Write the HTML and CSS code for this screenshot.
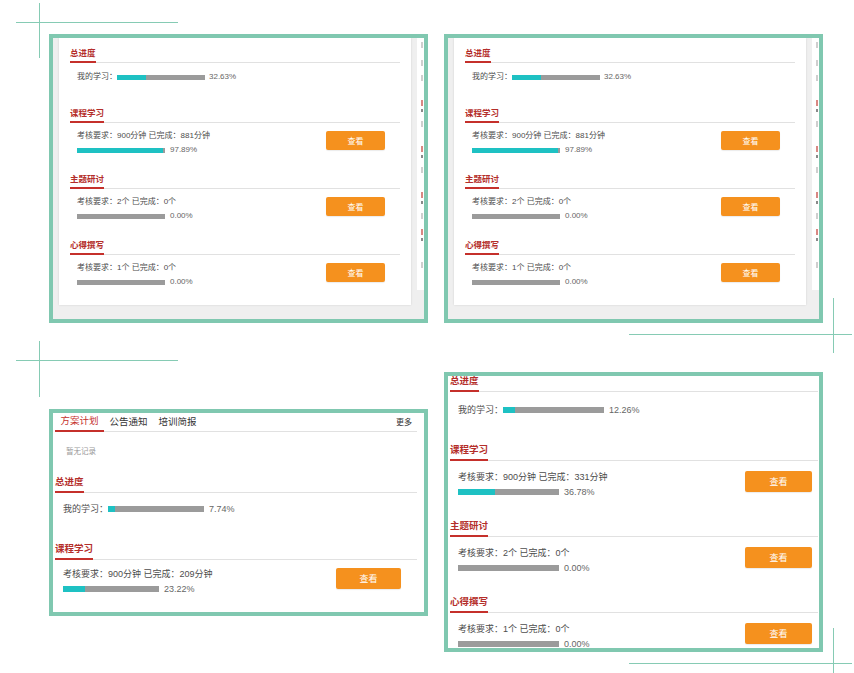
FILE: index.html
```html
<!DOCTYPE html>
<html lang="zh-CN">
<head>
    <meta charset="UTF-8">
    <meta name="viewport" content="width=device-width, initial-scale=1.0">
    <title>学习进度</title>
    <link rel="stylesheet" href="styles.css">
</head>
<body>
<div class="canvas">
    <!-- decorative crosses -->
    <span class="cross-h tl-h"></span><span class="cross-v tl-v"></span>
    <span class="cross-h ml-h"></span><span class="cross-v ml-v"></span>
    <span class="cross-h mr-h"></span><span class="cross-v mr-v"></span>
    <span class="cross-h br-h"></span><span class="cross-v br-v"></span>

    <div class="collage">
        <!-- shot 1 -->
        <div class="frame frame-top">
            <div class="desk">
                <div class="card">
                    <div class="sec sec-first">
                        <div class="sec-head"><span class="sec-title">总进度</span></div>
                        <div class="row"><span class="label">我的学习：</span><span class="bar"><i style="width:32.63%"></i></span><span class="pct">32.63%</span></div>
                    </div>
                    <div class="sec">
                        <div class="sec-head"><span class="sec-title">课程学习</span></div>
                        <div class="sec-body">
                            <div class="info">
                                <div class="req">考核要求：900分钟 已完成：881分钟</div>
                                <div class="row"><span class="bar"><i style="width:97.89%"></i></span><span class="pct">97.89%</span></div>
                            </div>
                            <button class="btn">查看</button>
                        </div>
                    </div>
                    <div class="sec">
                        <div class="sec-head"><span class="sec-title">主题研讨</span></div>
                        <div class="sec-body">
                            <div class="info">
                                <div class="req">考核要求：2个 已完成：0个</div>
                                <div class="row"><span class="bar"><i style="width:0%"></i></span><span class="pct">0.00%</span></div>
                            </div>
                            <button class="btn">查看</button>
                        </div>
                    </div>
                    <div class="sec">
                        <div class="sec-head"><span class="sec-title">心得撰写</span></div>
                        <div class="sec-body">
                            <div class="info">
                                <div class="req">考核要求：1个 已完成：0个</div>
                                <div class="row"><span class="bar"><i style="width:0%"></i></span><span class="pct">0.00%</span></div>
                            </div>
                            <button class="btn">查看</button>
                        </div>
                    </div>
                </div>
                <!-- neighbouring column, only its left edge shows -->
                <div class="side">
                    <span class="sd-g"></span>
                    <span class="sd-g sd-a"></span>
                    <span class="sd-g sd-b"></span>
                    <div class="sd-item"><span class="sd-r"></span><span class="sd-d"></span><span class="sd-g"></span></div>
                    <div class="sd-item"><span class="sd-r"></span><span class="sd-d"></span><span class="sd-g"></span></div>
                    <div class="sd-item"><span class="sd-r"></span><span class="sd-d"></span><span class="sd-g"></span></div>
                    <div class="sd-item sd-last"><span class="sd-r"></span><span class="sd-d"></span><span class="sd-g"></span></div>
                </div>
            </div>
        </div>

        <!-- shot 2 -->
        <div class="frame frame-top">
            <div class="desk">
                <div class="card">
                    <div class="sec sec-first">
                        <div class="sec-head"><span class="sec-title">总进度</span></div>
                        <div class="row"><span class="label">我的学习：</span><span class="bar"><i style="width:32.63%"></i></span><span class="pct">32.63%</span></div>
                    </div>
                    <div class="sec">
                        <div class="sec-head"><span class="sec-title">课程学习</span></div>
                        <div class="sec-body">
                            <div class="info">
                                <div class="req">考核要求：900分钟 已完成：881分钟</div>
                                <div class="row"><span class="bar"><i style="width:97.89%"></i></span><span class="pct">97.89%</span></div>
                            </div>
                            <button class="btn">查看</button>
                        </div>
                    </div>
                    <div class="sec">
                        <div class="sec-head"><span class="sec-title">主题研讨</span></div>
                        <div class="sec-body">
                            <div class="info">
                                <div class="req">考核要求：2个 已完成：0个</div>
                                <div class="row"><span class="bar"><i style="width:0%"></i></span><span class="pct">0.00%</span></div>
                            </div>
                            <button class="btn">查看</button>
                        </div>
                    </div>
                    <div class="sec">
                        <div class="sec-head"><span class="sec-title">心得撰写</span></div>
                        <div class="sec-body">
                            <div class="info">
                                <div class="req">考核要求：1个 已完成：0个</div>
                                <div class="row"><span class="bar"><i style="width:0%"></i></span><span class="pct">0.00%</span></div>
                            </div>
                            <button class="btn">查看</button>
                        </div>
                    </div>
                </div>
                <div class="side">
                    <span class="sd-g"></span>
                    <span class="sd-g sd-a"></span>
                    <span class="sd-g sd-b"></span>
                    <div class="sd-item"><span class="sd-r"></span><span class="sd-d"></span><span class="sd-g"></span></div>
                    <div class="sd-item"><span class="sd-r"></span><span class="sd-d"></span><span class="sd-g"></span></div>
                    <div class="sd-item"><span class="sd-r"></span><span class="sd-d"></span><span class="sd-g"></span></div>
                    <div class="sd-item sd-last"><span class="sd-r"></span><span class="sd-d"></span><span class="sd-g"></span></div>
                </div>
            </div>
        </div>

        <!-- shot 3 -->
        <div class="frame frame-plan">
            <div class="panel plan">
                <div class="tabs">
                    <span class="tab on">方案计划</span>
                    <span class="tab">公告通知</span>
                    <span class="tab">培训简报</span>
                    <span class="more">更多</span>
                </div>
                <p class="empty">暂无记录</p>
                <div class="sec sec-first">
                    <div class="sec-head"><span class="sec-title">总进度</span></div>
                    <div class="row"><span class="label">我的学习：</span><span class="bar"><i style="width:7.74%"></i></span><span class="pct">7.74%</span></div>
                </div>
                <div class="sec">
                    <div class="sec-head"><span class="sec-title">课程学习</span></div>
                    <div class="sec-body">
                        <div class="info">
                            <div class="req">考核要求：900分钟 已完成：209分钟</div>
                            <div class="row"><span class="bar"><i style="width:23.22%"></i></span><span class="pct">23.22%</span></div>
                        </div>
                        <button class="btn">查看</button>
                    </div>
                </div>
            </div>
        </div>

        <!-- shot 4 -->
        <div class="frame frame-long">
            <div class="panel long">
                <div class="sec sec-first">
                    <div class="sec-head"><span class="sec-title">总进度</span></div>
                    <div class="row"><span class="label">我的学习：</span><span class="bar"><i style="width:12.26%"></i></span><span class="pct">12.26%</span></div>
                </div>
                <div class="sec">
                    <div class="sec-head"><span class="sec-title">课程学习</span></div>
                    <div class="sec-body">
                        <div class="info">
                            <div class="req">考核要求：900分钟 已完成：331分钟</div>
                            <div class="row"><span class="bar"><i style="width:36.78%"></i></span><span class="pct">36.78%</span></div>
                        </div>
                        <button class="btn">查看</button>
                    </div>
                </div>
                <div class="sec">
                    <div class="sec-head"><span class="sec-title">主题研讨</span></div>
                    <div class="sec-body">
                        <div class="info">
                            <div class="req">考核要求：2个 已完成：0个</div>
                            <div class="row"><span class="bar"><i style="width:0%"></i></span><span class="pct">0.00%</span></div>
                        </div>
                        <button class="btn">查看</button>
                    </div>
                </div>
                <div class="sec">
                    <div class="sec-head"><span class="sec-title">心得撰写</span></div>
                    <div class="sec-body">
                        <div class="info">
                            <div class="req">考核要求：1个 已完成：0个</div>
                            <div class="row"><span class="bar"><i style="width:0%"></i></span><span class="pct">0.00%</span></div>
                        </div>
                        <button class="btn">查看</button>
                    </div>
                </div>
            </div>
        </div>
    </div>
</div>
</body>
</html>
```

FILE: styles.css
```css
* {
    box-sizing: border-box;
}

body {
    margin: 0;
    background: #fff;
    font-family: "Liberation Sans", "Noto Sans CJK SC", sans-serif;
    color: #4d4d4d;
}

p {
    margin: 0;
}

.canvas {
    position: relative;
    width: 854px;
    height: 673px;
    overflow: hidden;
}

/* decorative cross lines */
.cross-h,
.cross-v {
    position: absolute;
    background: #86cbb4;
}

.cross-h { height: 1px; }
.cross-v { width: 1px; }

.tl-h { left: 16px; top: 22px; width: 162px; }
.tl-v { left: 39px; top: 3px; height: 55px; }
.ml-h { left: 16px; top: 360px; width: 162px; }
.ml-v { left: 39px; top: 341px; height: 56px; }
.mr-h { left: 629px; top: 334px; width: 223px; }
.mr-v { left: 833px; top: 298px; height: 55px; }
.br-h { left: 629px; top: 663px; width: 223px; }
.br-v { left: 833px; top: 628px; height: 45px; }

.collage {
    display: grid;
    grid-template-columns: 379px 379px;
    column-gap: 16px;
    row-gap: 49px;
    padding: 34px 0 0 49px;
    align-items: start;
}

.frame {
    border: 4px solid #80c8b0;
    overflow: hidden;
    background: #fff;
}

.frame-top { height: 289px; }
.frame-plan { height: 207px; margin-top: 37px; }
.frame-long { height: 280px; }

/* shared section parts */
.sec-head {
    display: flex;
    border-bottom: 1px solid #e1e1e1;
}

.sec-title {
    color: #b42e2a;
    font-weight: bold;
    line-height: 12px;
    border-bottom: 2px solid #c5302b;
    margin-bottom: -1px;
}

.sec-body {
    display: flex;
    align-items: flex-start;
    justify-content: space-between;
}

.row {
    display: flex;
    align-items: center;
    line-height: 12px;
    white-space: nowrap;
}

.req {
    line-height: 12px;
    white-space: nowrap;
}

.bar {
    display: block;
    background: #9b9b9b;
}

.bar i {
    display: block;
    height: 100%;
    background: #1ec1c3;
}

.pct {
    color: #666;
}

.btn {
    border: 0;
    padding: 0;
    border-radius: 2px;
    background: #f5911e;
    color: #fff;
    font-family: inherit;
    box-shadow: 0 1px 1px rgba(0, 0, 0, 0.08);
}

/* top two screenshots */
.desk {
    height: 100%;
    display: flex;
    align-items: flex-start;
    gap: 6px;
    padding-left: 6px;
    background: #efefef;
}

.card {
    flex: 0 0 352px;
    height: 267px;
    padding: 9px 11px 0;
    background: #fff;
    box-shadow: 0 0 2px rgba(0, 0, 0, 0.12);
}

.card .sec-title {
    font-size: 8.5px;
    padding-bottom: 2px;
}

.card .sec {
    margin-bottom: 17px;
}

.card .sec-first {
    margin-bottom: 24px;
}

.card .sec-first .row {
    margin-top: 8px;
    padding-left: 7px;
}

.card .sec-body {
    margin-top: 7px;
    padding-left: 7px;
}

.card .row,
.card .req {
    font-size: 8px;
}

.card .info .row {
    margin-top: 2px;
}

.card .bar {
    width: 88px;
    height: 5px;
    margin-right: 5px;
}

.card .sec-first .bar {
    margin-right: 4px;
}

.card .btn {
    width: 59px;
    height: 19px;
    margin: 1px 15px 0 0;
    font-size: 8px;
}

/* the next column, cut by the frame */
.side {
    flex: 0 0 40px;
    height: 252px;
    padding: 3px 4px 0;
    background: #fff;
}

.sd-g,
.sd-r,
.sd-d {
    display: block;
    width: 2px;
    height: 8px;
    padding: 1px 0;
    background-clip: content-box;
}

.sd-g { background-color: #cfcfcf; }
.sd-r { background-color: #d98883; margin-top: 17px; }
.sd-d { background-color: #8a8a8a; margin-top: 1px; height: 5px; }
.sd-item .sd-g { margin-top: 7px; }
.sd-a { margin-top: 10px; }
.sd-b { margin-top: 7px; }
.sd-last .sd-r { margin-top: 8px; }
.sd-last .sd-g { margin-top: 19px; }

/* bottom two screenshots */
.panel .sec-title {
    font-size: 9.5px;
    padding-bottom: 3px;
}

.panel .row,
.panel .req {
    font-size: 9px;
}

.panel .sec {
    margin-bottom: 22px;
}

.panel .sec-first {
    margin-bottom: 28px;
}

.panel .sec-first .row {
    margin-top: 10px;
    padding-left: 8px;
}

.panel .sec-body {
    padding-left: 8px;
}

.panel .info .row {
    margin-top: 3px;
}

.panel .bar {
    height: 6px;
    margin-right: 5px;
}

.panel .btn {
    height: 21px;
    font-size: 9px;
}

.plan {
    padding: 0 7px 0 2px;
}

.tabs {
    display: flex;
    align-items: flex-end;
    border-bottom: 1px solid #e1e1e1;
}

.tab {
    font-size: 9.5px;
    line-height: 12px;
    padding: 2px 5.5px 3px;
    color: #333;
}

.tab.on {
    color: #c5302b;
    border-bottom: 2px solid #c5302b;
    margin-bottom: -1px;
}

.more {
    margin-left: auto;
    padding: 0 5px 2px 0;
    font-size: 8px;
    line-height: 12px;
    color: #333;
}

.empty {
    margin: 15px 0 0 11px;
    font-size: 7.5px;
    line-height: 10px;
    color: #999;
}

.plan .sec-first {
    margin-top: 19px;
}

.plan .sec-body {
    margin-top: 8px;
}

.plan .bar {
    width: 96px;
}

.plan .btn {
    width: 65px;
    margin-right: 16px;
}

.long {
    padding: 0 1px 0 2px;
}

.long .sec-first {
    margin-top: -1px;
}

.long .sec-first .row {
    margin-top: 12px;
}

.long .sec-body {
    margin-top: 10px;
}

.long .bar {
    width: 101px;
}

.long .btn {
    width: 67px;
    margin-right: 6px;
}
```
